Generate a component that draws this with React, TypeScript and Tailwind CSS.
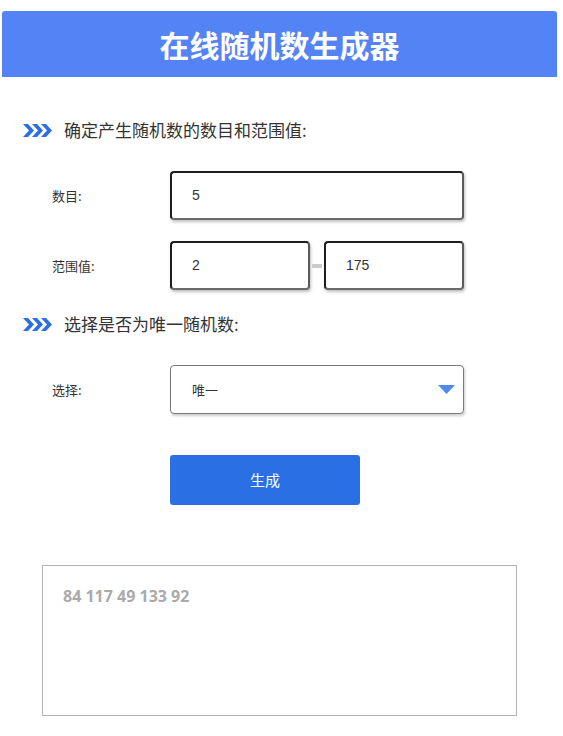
import React from "react";

const cjk = { fontFamily: '"Noto Sans CJK SC", "Microsoft YaHei", sans-serif' };

function Chevrons() {
  return (
    <svg width="30" height="13" viewBox="0 0 30 13" className="shrink-0">
      <path d="M0 0 H5 L11 6.5 L5 13 H0 L6 6.5 Z" fill="#2d6fe3" />
      <path d="M9 0 H14 L20 6.5 L14 13 H9 L15 6.5 Z" fill="#2d6fe3" />
      <path d="M18 0 H23 L29 6.5 L23 13 H18 L24 6.5 Z" fill="#2d6fe3" />
    </svg>
  );
}

function SectionTitle({ text }: { text: string }) {
  return (
    <div className="flex items-center h-[20px] pl-[23px]">
      <Chevrons />
      <span className="ml-[11px] text-[17px] leading-[20px] text-[#333]" style={cjk}>
        {text}
      </span>
    </div>
  );
}

const inputCls =
  "h-[49px] bg-white rounded-[4px] border-2 border-[#1e1e1e] border-r-[#5a5a5a] border-b-[#6a6a6a] shadow-[1px_2px_3px_rgba(0,0,0,0.25)] flex items-center pl-[20px] text-[14px] text-[#333]";

function Label({ text }: { text: string }) {
  return (
    <div className="w-[170px] pl-[52px] text-[13px] text-[#333] shrink-0" style={cjk}>
      {text}
    </div>
  );
}

export default function App() {
  return (
    <div className="w-[563px] h-[736px] bg-white overflow-hidden">
      <div className="mt-[11px] ml-[2px] w-[555px] h-[66px] bg-[#5483f6] rounded-t-[3px] flex items-center justify-center">
        <span className="text-[30px] font-bold text-white" style={cjk}>
          在线随机数生成器
        </span>
      </div>

      <div className="mt-[43px]">
        <SectionTitle text="确定产生随机数的数目和范围值:" />
      </div>

      <div className="mt-[31px] flex items-center">
        <Label text="数目:" />
        <div className={inputCls + " w-[294px]"} style={{ fontFamily: '"Liberation Sans", Arial, sans-serif' }}>
          5
        </div>
      </div>

      <div className="mt-[21px] flex items-center">
        <Label text="范围值:" />
        <div className="flex items-center">
          <div className={inputCls + " w-[140px]"} style={{ fontFamily: '"Liberation Sans", Arial, sans-serif' }}>
            2
          </div>
          <div className="mx-[2px] w-[10px] h-[4px] bg-[#cccccc]" />
          <div className={inputCls + " w-[140px]"} style={{ fontFamily: '"Liberation Sans", Arial, sans-serif' }}>
            175
          </div>
        </div>
      </div>

      <div className="mt-[24px]">
        <SectionTitle text="选择是否为唯一随机数:" />
      </div>

      <div className="mt-[31px] flex items-center">
        <Label text="选择:" />
        <div className="relative w-[294px] h-[49px] bg-white rounded-[4px] border border-[#7a7a7a] shadow-[1px_2px_3px_rgba(0,0,0,0.2)] flex items-center pl-[21px] text-[13px] text-[#333]" style={cjk}>
          唯一
          <svg width="17" height="9" viewBox="0 0 17 9" className="absolute right-[8px] top-[19px]">
            <path d="M0 0 H17 L8.5 9 Z" fill="#4f8af0" />
          </svg>
        </div>
      </div>

      <div className="mt-[41px] pl-[170px]">
        <button className="w-[190px] h-[50px] bg-[#2b6fe5] rounded-[3px] text-white text-[15px]" style={cjk}>
          生成
        </button>
      </div>

      <div className="mt-[60px] ml-[42px] w-[475px] h-[151px] border border-[#b4b4b4] pt-[20px] pl-[20px]">
        <div className="text-[16px] font-bold text-[#aaaaaa] leading-[20px]" style={{ fontFamily: '"Open Sans", sans-serif' }}>
          84 117 49 133 92
        </div>
      </div>
    </div>
  );
}
